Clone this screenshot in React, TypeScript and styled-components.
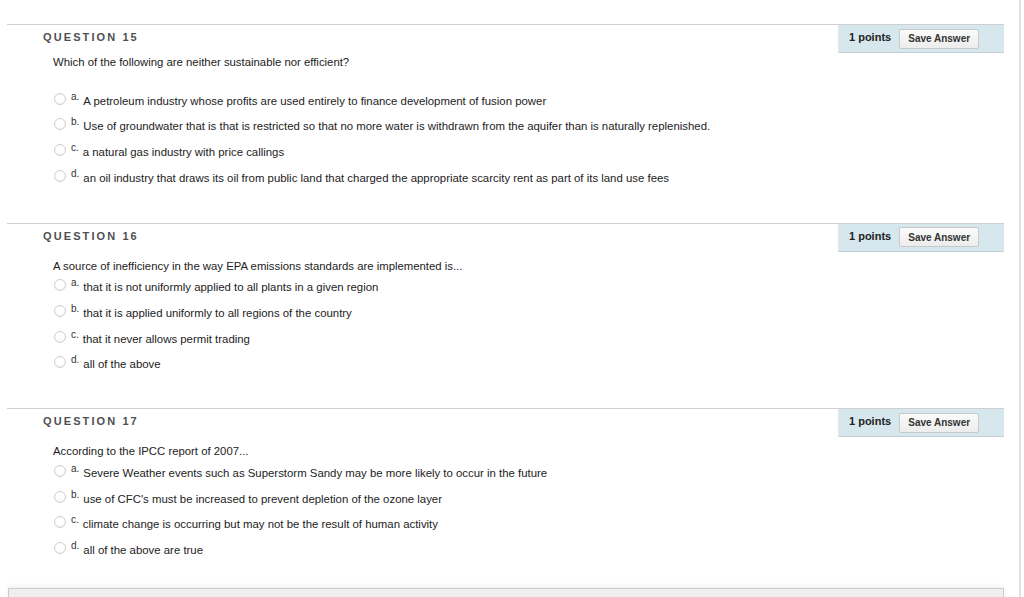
import styled, { createGlobalStyle } from "styled-components";

const GlobalStyle = createGlobalStyle`
  html, body {
    margin: 0;
    padding: 0;
    background: #ffffff;
    font-family: "Liberation Sans", Arial, Helvetica, sans-serif;
    color: #222;
  }
`;

const Page = styled.div`
  display: flex;
  min-height: 100vh;
  overflow: hidden;
`;

const Main = styled.main`
  flex: 0 0 997px;
  margin-left: 7px;
  padding-top: 24px;
`;

const Filler = styled.div`
  flex: 1;
`;

const EdgeStripe = styled.div`
  flex: 0 0 2px;
  margin-right: 3px;
  background: #e3e0dc;
`;

const Section = styled.section<{ $bottom: number }>`
  border-top: 1px solid #cfcfcf;
  padding-bottom: ${(p) => p.$bottom}px;
`;

const Header = styled.div`
  display: flex;
  align-items: flex-start;
  height: 28px;
`;

const Title = styled.h3`
  flex: 1;
  margin: 0;
  padding: 5px 0 0 36px;
  font-size: 11px;
  line-height: 14px;
  font-weight: bold;
  letter-spacing: 2.1px;
  color: #4f4f4f;
`;

const PointsBox = styled.div`
  display: flex;
  align-items: center;
  box-sizing: border-box;
  width: 166px;
  height: 28px;
  padding-left: 10px;
  gap: 8px;
  background: #d6e7ee;
  border-left: 1px solid #dfe8ec;
  border-bottom: 1px solid #c4cfd4;
`;

const Points = styled.span`
  font-size: 11px;
  font-weight: bold;
  color: #222;
  margin-top: -3px;
`;

const SaveButton = styled.button`
  box-sizing: border-box;
  width: 80px;
  height: 20px;
  padding: 0;
  font-family: "Liberation Sans", Arial, sans-serif;
  font-size: 10px;
  font-weight: bold;
  color: #333;
  background: linear-gradient(#fbfbfb, #ececec);
  border: 1px solid #c9c9c9;
  border-radius: 2px;
`;

const Prompt = styled.p<{ $top: number; $bottom: number }>`
  margin: ${(p) => p.$top}px 0 ${(p) => p.$bottom}px 46px;
  font-size: 11.35px;
  line-height: 14px;
  color: #222;
`;

const Options = styled.ul`
  list-style: none;
  margin: 0;
  padding: 0 0 0 47px;
`;

const Option = styled.li`
  display: flex;
  align-items: center;
  height: 25.67px;
  font-size: 11.4px;
  color: #222;
`;

const Radio = styled.span`
  box-sizing: border-box;
  flex: 0 0 12px;
  width: 12px;
  height: 12px;
  margin-top: -4px;
  border-radius: 50%;
  border: 1px solid #cfcfcf;
  background: radial-gradient(circle at 50% 35%, #ffffff 45%, #f0f0f0 100%);
`;

const Letter = styled.span`
  margin: -9px 4px 0 5px;
  font-size: 10px;
  color: #333;
`;

const BottomPanel = styled.div`
  margin: 25px 0 0 1px;
  height: 20px;
  background: #efefef;
  border: 1px solid #cccccc;
  box-shadow: 0 -2px 5px rgba(0, 0, 0, 0.06);
`;

type Question = {
  num: number;
  prompt: string;
  promptTop: number;
  promptBottom: number;
  bottom: number;
  options: string[];
};

const questions: Question[] = [
  {
    num: 15,
    prompt: "Which of the following are neither sustainable nor efficient?",
    promptTop: 2,
    promptBottom: 19,
    bottom: 32,
    options: [
      "A petroleum industry whose profits are used entirely to finance development of fusion power",
      "Use of groundwater that is that is restricted so that no more water is withdrawn from the aquifer than is naturally replenished.",
      "a natural gas industry with price callings",
      "an oil industry that draws its oil from public land that charged the appropriate scarcity rent as part of its land use fees",
    ],
  },
  {
    num: 16,
    prompt: "A source of inefficiency in the way EPA emissions standards are implemented is...",
    promptTop: 7,
    promptBottom: 2,
    bottom: 31,
    options: [
      "that it is not uniformly applied to all plants in a given region",
      "that it is applied uniformly to all regions of the country",
      "that it never allows permit trading",
      "all of the above",
    ],
  },
  {
    num: 17,
    prompt: "According to the IPCC report of 2007...",
    promptTop: 7,
    promptBottom: 2,
    bottom: 0,
    options: [
      "Severe Weather events such as Superstorm Sandy may be more likely to occur in the future",
      "use of CFC's must be increased to prevent depletion of the ozone layer",
      "climate change is occurring but may not be the result of human activity",
      "all of the above are true",
    ],
  },
];

const letters = ["a.", "b.", "c.", "d."];

const App = () => {
  return (
    <Page>
      <GlobalStyle />
      <Main>
        {questions.map((q) => (
          <Section key={q.num} $bottom={q.bottom}>
            <Header>
              <Title>QUESTION {q.num}</Title>
              <PointsBox>
                <Points>1 points</Points>
                <SaveButton>Save Answer</SaveButton>
              </PointsBox>
            </Header>
            <Prompt $top={q.promptTop} $bottom={q.promptBottom}>
              {q.prompt}
            </Prompt>
            <Options>
              {q.options.map((text, i) => (
                <Option key={i}>
                  <Radio />
                  <Letter>{letters[i]}</Letter>
                  {text}
                </Option>
              ))}
            </Options>
          </Section>
        ))}
        <BottomPanel />
      </Main>
      <Filler />
      <EdgeStripe />
    </Page>
  );
};

export default App;
